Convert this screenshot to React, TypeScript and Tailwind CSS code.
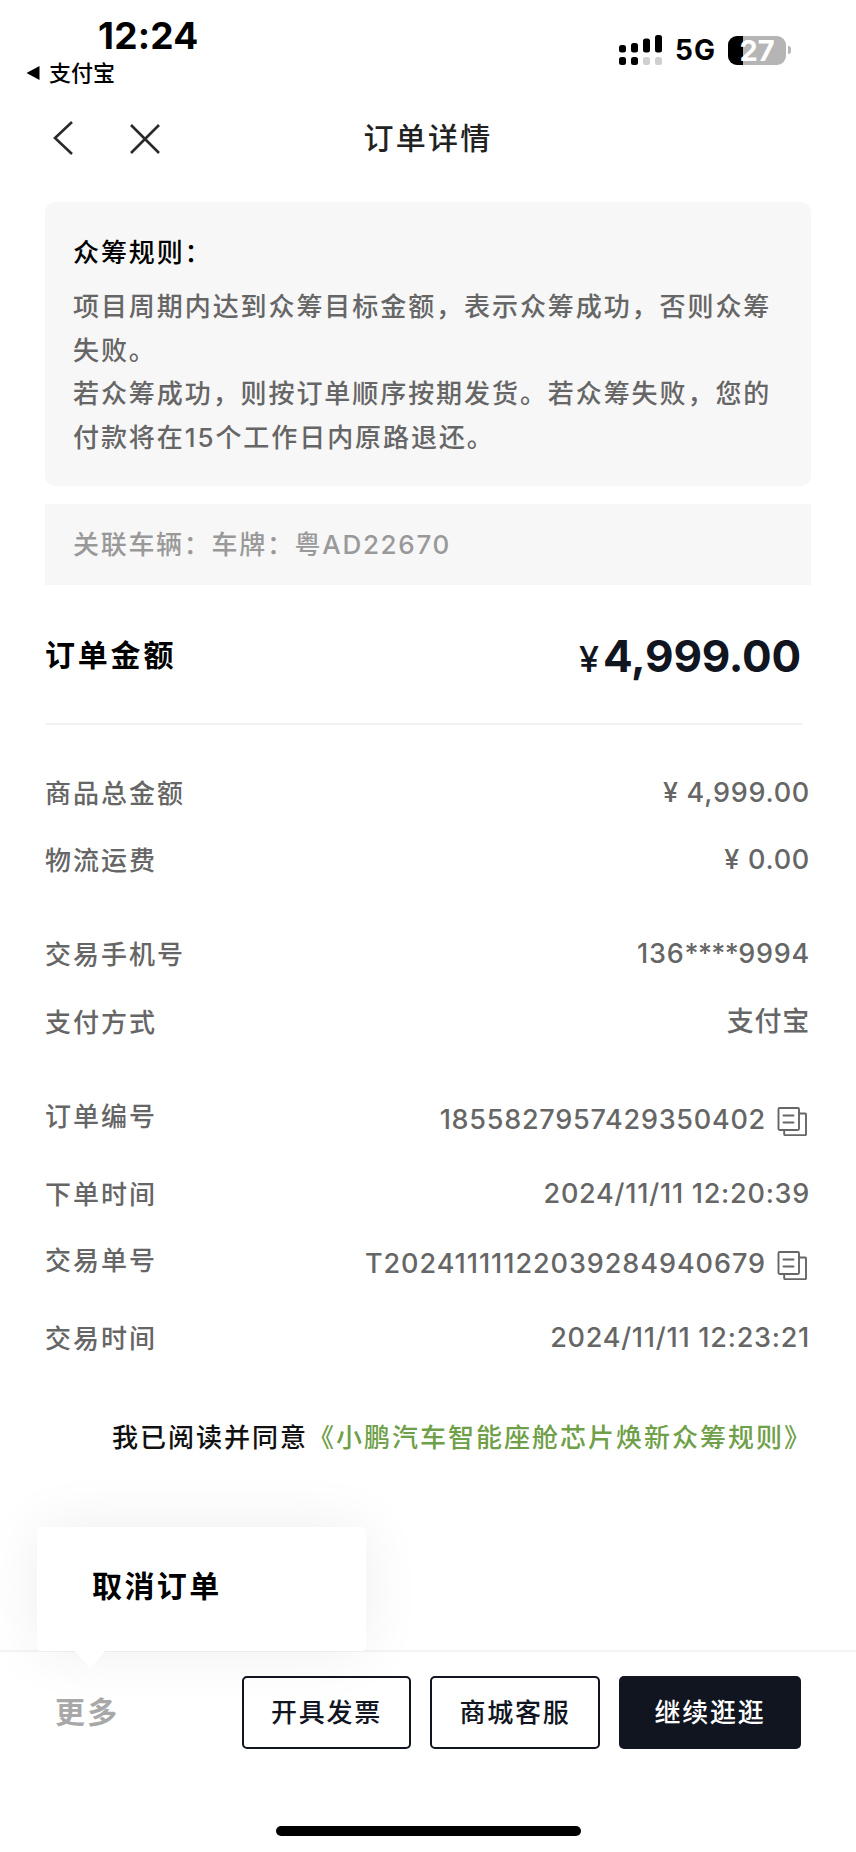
import type { ReactNode } from "react";

const Copy = () => (
  <svg width="30" height="30" viewBox="0 0 30 30" fill="none" stroke="#666666" strokeWidth="1.9" strokeLinejoin="round" strokeLinecap="round" className="mt-[3px] mr-[3px] ml-[11px] shrink-0">
    <rect x="1.5" y="1" width="20.5" height="22" rx="1.2" />
    <path d="M6.5 8.5h10M6.5 15.5h10" />
    <path d="M22 6.5h6.2a.8.8 0 0 1 .8.8v20a.8.8 0 0 1-.8.8H8a.8.8 0 0 1-.8-.8V23" />
  </svg>
);

const Row = ({ label, value, copy, cls, valueCls }: { label: string; value: ReactNode; copy?: boolean; cls?: string; valueCls?: string }) => (
  <div className={`flex h-[68px] items-center justify-between pl-[45px] pr-[46px] text-[#666666] ${cls ?? ""}`}>
    <span className={`text-[26px] font-medium tracking-[2px] ${copy ? "mb-[8px]" : ""}`}>{label}</span>
    <span className={`flex items-center text-[27px] font-medium ${valueCls ?? "tracking-[0.75px]"}`}>
      <span>{value}</span>
      {copy && <Copy />}
    </span>
  </div>
);

export default function App() {
  return (
    <div lang="zh-CN" className="relative flex h-[1852px] w-[856px] flex-col overflow-hidden bg-white font-['Inter','Noto_Sans_CJK_SC',sans-serif] text-black">
      {/* status bar */}
      <div className="flex h-[100px] shrink-0 justify-between pl-[26px] pr-[65px]">
        <div className="flex flex-col">
          <div className="mt-[15px] ml-[72px] h-[42px] text-[37px] leading-[42px] font-bold tracking-[0.2px]">12:24</div>
          <div className="mt-[1px] flex items-center gap-[9px]">
            <svg width="14" height="14" viewBox="0 0 13 14"><path d="M13 0v14L0 7z" fill="#000" /></svg>
            <span className="text-[22px] leading-[30px] font-medium">支付宝</span>
          </div>
        </div>
        <div className="mt-[35px] flex h-[30px] items-center">
          <svg width="44" height="30" viewBox="0 0 44 30">
            <rect x="0" y="10" width="7" height="7.5" rx="2.5" fill="#000" />
            <rect x="12" y="8" width="7" height="9.5" rx="2.5" fill="#000" />
            <rect x="24" y="3.5" width="7" height="14" rx="2.5" fill="#000" />
            <rect x="36" y="0" width="7" height="17.5" rx="2.5" fill="#000" />
            <rect x="0" y="22" width="7" height="8" rx="2.5" fill="#000" />
            <rect x="12" y="22" width="7" height="8" rx="2.5" fill="#000" />
            <rect x="24" y="22" width="7" height="8" rx="2.5" fill="#cfcfcf" />
            <rect x="36" y="22" width="7" height="8" rx="2.5" fill="#cfcfcf" />
          </svg>
          <span className="ml-[12px] text-[28px] leading-[30px] font-bold tracking-[1px]">5G</span>
          <div className="relative ml-[12px] flex h-[29px] w-[58px] items-center justify-center rounded-[9px] bg-[#b5b5b5]">
            <div className="absolute top-0 bottom-0 left-0 w-[15px] rounded-l-[9px] bg-black" />
            <span className="relative text-[29px] leading-[29px] font-bold text-white">27</span>
          </div>
          <div className="ml-[2px] h-[8px] w-[3px] rounded-r-full bg-[#b5b5b5]" />
        </div>
      </div>

      {/* nav */}
      <div className="relative flex h-[76px] shrink-0 items-center justify-center">
        <svg width="24" height="36" viewBox="0 0 24 36" fill="none" stroke="#2a2a2a" strokeWidth="2.6" className="absolute top-[20px] left-[51px]">
          <path d="M21 2 4 18l17 16" />
        </svg>
        <svg width="32" height="32" viewBox="0 0 32 32" fill="none" stroke="#2a2a2a" strokeWidth="2.6" className="absolute top-[23px] left-[129px]">
          <path d="M2 2l28 28M30 2 2 30" />
        </svg>
        <span className="text-[30px] leading-none font-medium tracking-[2.2px] text-[#222]">订单详情</span>
      </div>

      {/* rule card */}
      <div className="mx-[45px] mt-[26px] h-[284px] shrink-0 rounded-[10px] bg-[#f7f7f7] px-[28px] pt-[32px]">
        <div className="text-[26px] leading-[38px] font-medium tracking-[1.9px] text-black">众筹规则：</div>
        <div className="mt-[13px] text-[26px] leading-[43.7px] font-medium tracking-[1.93px] text-[#666666]">
          项目周期内达到众筹目标金额，表示众筹成功，否则众筹失败。
          <br />
          若众筹成功，则按订单顺序按期发货。若众筹失败，您的付款将在15个工作日内原路退还。
        </div>
      </div>

      {/* vehicle */}
      <div className="mx-[45px] mt-[18px] flex h-[81px] shrink-0 items-center bg-[#f7f7f7] px-[28px] text-[26px] font-medium tracking-[1.7px] text-[#999999]">
        关联车辆：车牌：粤AD22670
      </div>

      {/* amount */}
      <div className="mt-[26px] flex h-[86px] shrink-0 items-center justify-between pl-[45px] pr-[55px]">
        <span className="mt-[2px] text-[30px] font-semibold tracking-[2.8px] text-black">订单金额</span>
        <span className="mt-[4px] flex items-baseline font-bold text-[#11151f]">
          <span className="mr-[4px] text-[36px] leading-none font-medium">¥</span>
          <span className="text-[44px] leading-none tracking-[-0.2px]">4,999.00</span>
        </span>
      </div>
      <div className="mt-[26px] mr-[54px] ml-[46px] h-[2px] shrink-0 bg-[#f1f1f1]" />

      {/* rows */}
      <Row cls="mt-[34px]" label="商品总金额" value="¥ 4,999.00" />
      <Row cls="mt-[-1px]" label="物流运费" value="¥ 0.00" />
      <Row cls="mt-[26px]" label="交易手机号" value={<>136<span className="tracking-[-0.6px]">****</span>9994</>} />
      <Row label="支付方式" value="支付宝" />
      <Row cls="mt-[30px]" label="订单编号" value="1855827957429350402" copy />
      <Row cls="mt-[6px]" label="下单时间" value="2024/11/11 12:20:39" />
      <Row cls="mt-[2px]" label="交易单号" value="T20241111122039284940679" copy valueCls="tracking-[0.95px]" />
      <Row cls="mt-[6px]" label="交易时间" value="2024/11/11 12:23:21" />

      {/* agreement */}
      <div className="mt-[48px] flex justify-end pr-[44px] text-[26px] leading-[36px] font-medium tracking-[2px]">
        <span className="text-[#111111]">我已阅读并同意</span>
        <span className="text-[#6f9f48]">《小鹏汽车智能座舱芯片焕新众筹规则》</span>
      </div>

      {/* bottom bar */}
      <div className="absolute right-0 bottom-0 left-0 h-[202px] border-t-2 border-[#f4f4f4] bg-white">
        <div className="flex items-start pt-[24px] pl-[55px]">
          <span className="mt-[16px] w-[187px] text-[30px] leading-[40px] font-bold tracking-[2.2px] text-[#a8a8a8]">更多</span>
          <button className="h-[73px] w-[169px] rounded-[5px] border-2 border-[#11151f] text-[26px] font-medium tracking-[1.8px] text-[#11151f]">开具发票</button>
          <button className="ml-[19px] h-[73px] w-[170px] rounded-[5px] border-2 border-[#11151f] text-[26px] font-medium tracking-[1.8px] text-[#11151f]">商城客服</button>
          <button className="ml-[19px] h-[73px] w-[182px] rounded-[5px] bg-[#11151f] text-[26px] font-medium tracking-[1.8px] text-white">继续逛逛</button>
        </div>
        <div className="absolute bottom-[16px] left-[276px] h-[10px] w-[305px] rounded-full bg-black" />
      </div>

      {/* popup */}
      <div className="absolute top-[1527px] left-[37px] flex h-[124px] w-[329px] items-center rounded-[4px] bg-white pl-[55px] shadow-[0_0_60px_rgba(0,0,0,0.07)]">
        <span className="mb-[5px] text-[30px] font-semibold tracking-[2.4px] text-black">取消订单</span>
      </div>
      <svg width="30" height="18" viewBox="0 0 30 18" className="absolute top-[1651px] left-[75px]">
        <path d="M0 0h30L15 18z" fill="#ffffff" />
      </svg>
    </div>
  );
}
